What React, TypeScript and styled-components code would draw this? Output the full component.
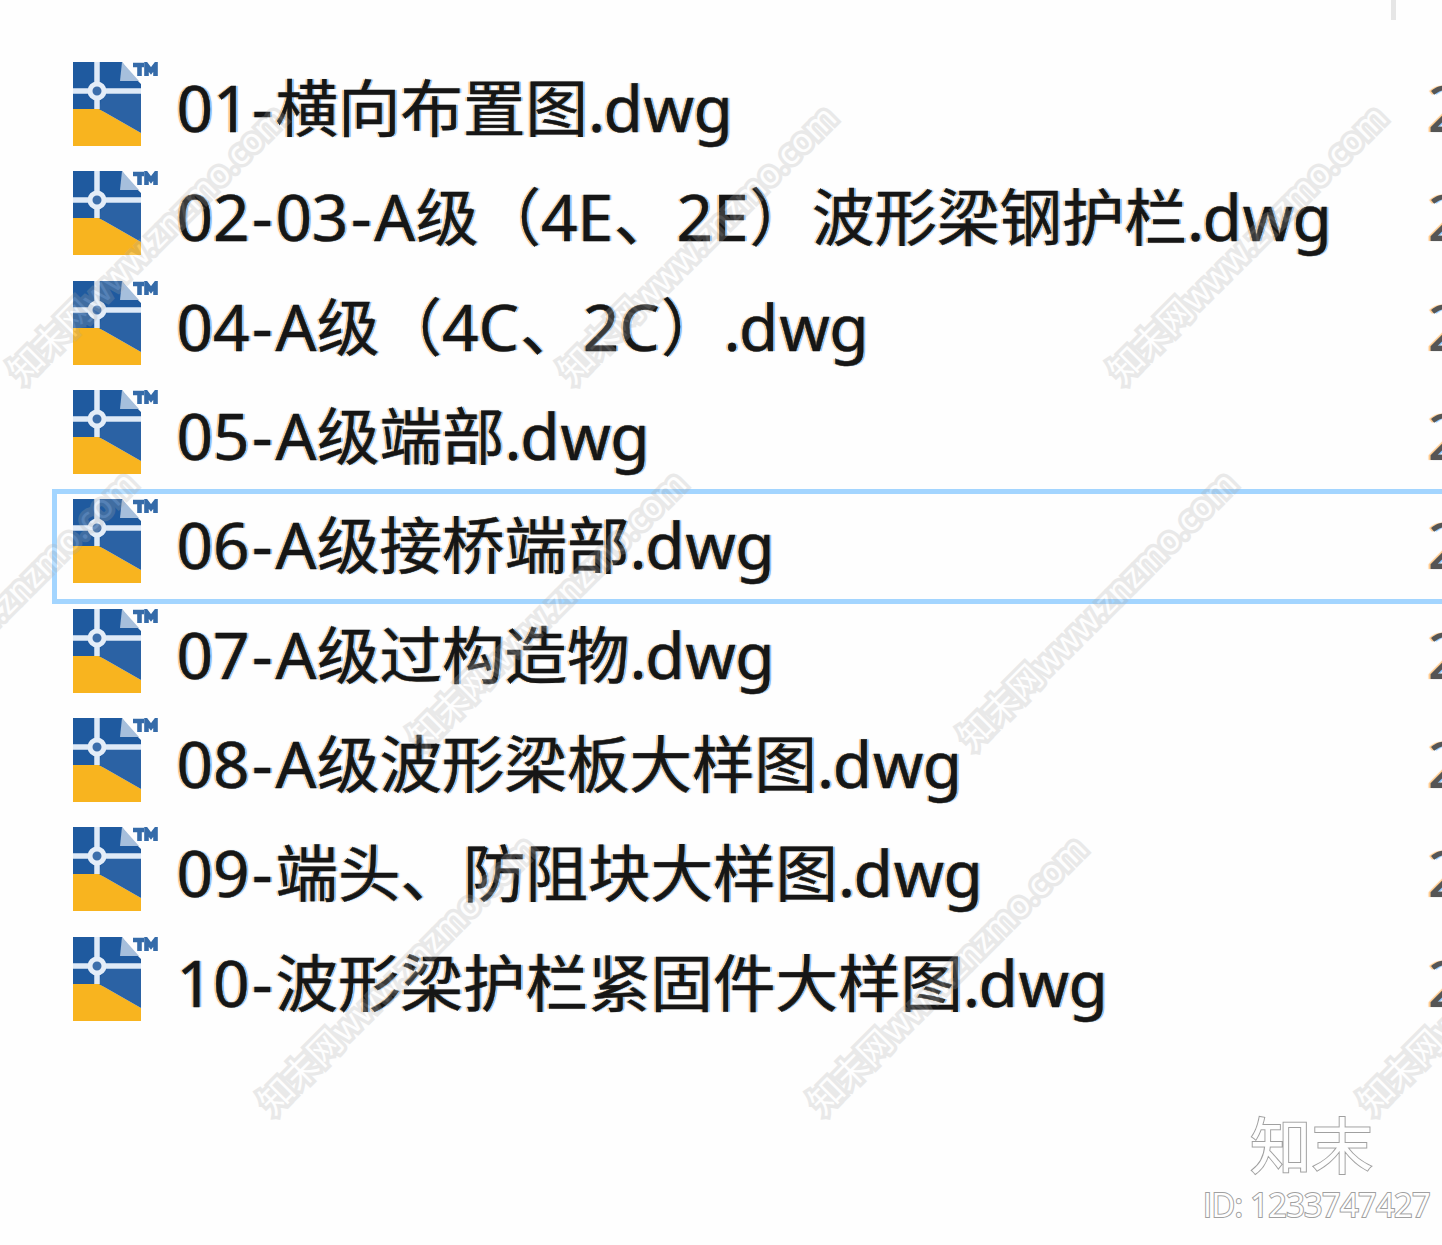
import React from "react";
import styled, { createGlobalStyle, css } from "styled-components";

const PX = 5.208;

const GlobalStyle = createGlobalStyle`
  html, body { margin: 0; padding: 0; background: #fefefe; }
`;

const Page = styled.div`
  position: relative;
  width: 1442px;
  height: 1245px;
  overflow: hidden;
  background: #fefefe;
  font-family: "Noto Sans", "Noto Sans CJK SC", sans-serif;
`;

const HeaderStrip = styled.div`
  display: flex;
  justify-content: flex-end;
  box-sizing: border-box;
  height: 51.8px;
  padding-right: 46.5px;
`;

const ColumnDivider = styled.div`
  width: 5px;
  height: 20px;
  background: #e6e6e6;
`;

const FileList = styled.div`
  padding-left: 52px;
`;

const Row = styled.div<{ $selected?: boolean }>`
  display: flex;
  align-items: flex-start;
  box-sizing: border-box;
  width: 1500px;
  height: ${22 * PX}px;
  margin-bottom: -${PX}px;
  border: 5px solid ${(p) => (p.$selected ? "#a3d5ff" : "transparent")};
  padding: 5px 0 0 15.5px;
`;

const IconSlot = styled.div`
  flex: none;
  width: 104px;
  height: 84px;
`;

const fringe = css`
  text-shadow: -2px 0 1px rgba(255, 160, 50, 0.6), 2px 0 1px rgba(40, 150, 255, 0.6);
`;

const FileName = styled.div`
  flex: none;
  width: 1251px;
  height: 91px;
  line-height: 91px;
  font-size: 64px;
  color: #161616;
  white-space: pre;
  -webkit-text-stroke: 0.4px #161616;
  ${fringe}
`;

const Run = styled.span<{ $spacing: number; $pad?: number }>`
  letter-spacing: ${(p) => p.$spacing}px;
  padding: 0 ${(p) => p.$pad ?? 0}px;
`;

const Han = styled.span`
  font-family: "Noto Sans CJK SC", sans-serif;
  font-size: 62.5px;
  line-height: 1;
`;

const DateCell = styled.div`
  flex: none;
  height: 91px;
  line-height: 91px;
  font-size: 64px;
  color: #555;
  ${fringe}
`;

const Watermark = styled.div`
  position: absolute;
  width: 430px;
  height: 50px;
  line-height: 50px;
  margin: -26px 0 0 -215px;
  text-align: center;
  white-space: nowrap;
  font-family: "Noto Sans", "Noto Sans CJK SC", sans-serif;
  font-size: 33.5px;
  letter-spacing: 0.5px;
  color: #fff;
  -webkit-text-stroke: 7px #ababab;
  paint-order: stroke fill;
  stroke-linejoin: round;
  opacity: 0.24;
  transform: rotate(-45deg);
  pointer-events: none;
`;

const Stamp = styled.div`
  position: absolute;
  right: 12px;
  top: 1104px;
  display: flex;
  flex-direction: column;
  align-items: flex-end;
  color: #fefefe;
  -webkit-text-stroke: 2px #a0a0a0;
  paint-order: stroke fill;
  white-space: nowrap;
`;

const Brand = styled.div`
  height: 78px;
  line-height: 78px;
  padding-right: 57px;
  font-family: "Noto Sans CJK SC", sans-serif;
  font-size: 61.5px;
`;

const StampId = styled.div`
  height: 46px;
  line-height: 46px;
  font-family: "Open Sans", sans-serif;
  font-size: 32.5px;
  letter-spacing: -0.6px;
`;

const DwgIcon = () => (
  <svg width="86" height="84" viewBox="0 0 86 84">
    <path d="M0 0H49L57 11L68 22V64L25 47H0Z" fill="#1f5a9f" />
    <path d="M0 47H26L68 71V84H0Z" fill="#f8b41f" />
    <path d="M26 47L68 71V32H30Z" fill="#2b62a4" />
    <path d="M49 0L47 19H66Z" fill="#a6bfdc" />
    <path d="M51 0L68 19V0Z" fill="#fefefe" />
    <path d="M24 0V47M0 29H68" stroke="#dfeaf7" strokeWidth="5.5" />
    <circle cx="24" cy="29" r="7" fill="#3c6eab" stroke="#e4edf8" strokeWidth="5" />
    <path d="M60 3H71M66.5 3V14M73.5 14V3L78 9L82.5 3V14" fill="none" stroke="#356ba9" strokeWidth="4.6" />
  </svg>
);

/* Advance of each latin glyph, relative to the face's own metrics. */
const spacing: Record<string, number> = {
  "-": 0, A: 0.8, E: 0.9, C: 1.3, ".": -1.6, d: 1, w: -0.6, g: 2.3,
};

const Name = ({ text }: { text: string }) => (
  <FileName>
    {(text.match(/[0-9]+|[\x21-\x7e]|[^\x20-\x7e]+/g) ?? []).map((part, i) =>
      part.charCodeAt(0) > 127 ? (
        <Han key={i}>{part}</Han>
      ) : (
        <Run key={i} $spacing={spacing[part] ?? -0.15} $pad={part === "-" ? 2.7 : 0}>
          {part}
        </Run>
      )
    )}
  </FileName>
);

const files = [
  "01-横向布置图.dwg",
  "02-03-A级（4E、2E）波形梁钢护栏.dwg",
  "04-A级（4C、2C）.dwg",
  "05-A级端部.dwg",
  "06-A级接桥端部.dwg",
  "07-A级过构造物.dwg",
  "08-A级波形梁板大样图.dwg",
  "09-端头、防阻块大样图.dwg",
  "10-波形梁护栏紧固件大样图.dwg",
];

const marks = [
  [147, 244], [697, 244], [1247, 244],
  [-3, 610], [547, 610], [1097, 610],
  [397, 975], [947, 975], [1497, 975],
];

export default function App() {
  return (
    <Page>
      <GlobalStyle />
      <HeaderStrip>
        <ColumnDivider />
      </HeaderStrip>
      <FileList>
        {files.map((file, i) => (
          <Row key={file} $selected={i === 4}>
            <IconSlot>
              <DwgIcon />
            </IconSlot>
            <Name text={file} />
            <DateCell>2</DateCell>
          </Row>
        ))}
      </FileList>
      {marks.map(([x, y]) => (
        <Watermark key={`${x}-${y}`} style={{ left: x, top: y }}>
          知末网www.znzmo.com
        </Watermark>
      ))}
      <Stamp>
        <Brand>知末</Brand>
        <StampId>ID: 1233747427</StampId>
      </Stamp>
    </Page>
  );
}
